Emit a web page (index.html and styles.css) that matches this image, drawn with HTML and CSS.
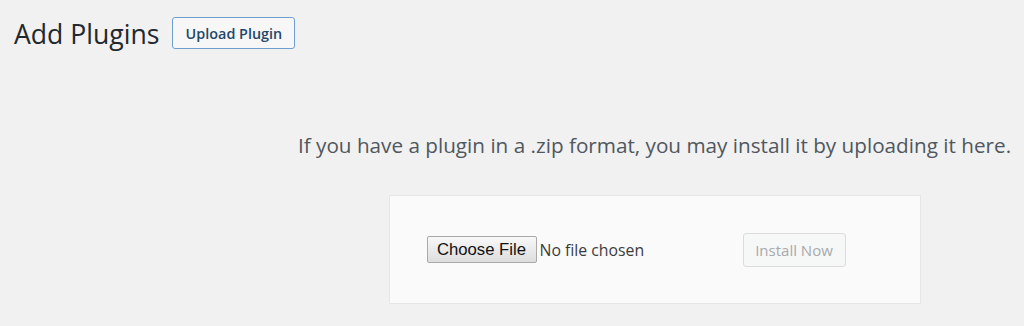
FILE: index.html
```html
<!DOCTYPE html>
<html lang="en">
<head>
    <meta charset="UTF-8">
    <meta name="viewport" content="width=device-width, initial-scale=1.0">
    <title>Add Plugins</title>
    <link rel="stylesheet" href="styles.css">
</head>
<body>
    <div class="wrap">
        <div class="page-head">
            <h1>Add Plugins</h1>
            <button type="button" class="upload-btn">Upload Plugin</button>
        </div>

        <div class="upload-plugin">
            <p class="install-help">If you have a plugin in a .zip format, you may install it by uploading it here.</p>
            <form class="upload-form">
                <button type="button" class="choose-btn">Choose File</button>
                <span class="file-name">No file chosen</span>
                <button type="submit" class="install-btn" disabled>Install Now</button>
            </form>
        </div>
    </div>
</body>
</html>
```

FILE: styles.css
```css
:root {
    --background: #f1f1f1;
    --text: #1d2327;
    --muted: #50575e;
    --primary: #6f9fd0;
    --primary-dark: #24476a;
}

* {
    margin: 0;
    padding: 0;
    box-sizing: border-box;
}

body {
    font-family: "Open Sans", "Noto Sans", sans-serif;
    background: var(--background);
    color: var(--text);
    height: 326px;
    overflow: hidden;
}

.page-head {
    display: flex;
    align-items: flex-start;
    padding: 17px 0 0 14px;
}

h1 {
    font-size: 26.6px;
    font-weight: 400;
    line-height: 32px;
    margin-top: 1px;
    color: #23282d;
}

.upload-btn {
    margin-left: 13px;
    width: 123px;
    height: 32px;
    font-family: inherit;
    font-size: 14.4px;
    font-weight: 600;
    color: var(--primary-dark);
    background: #f7f7f7;
    border: 1px solid var(--primary);
    border-radius: 3px;
}

.upload-plugin {
    margin-left: 285px;
    width: 739px;
    text-align: center;
}

.install-help {
    margin-top: 81px;
    font-size: 20.7px;
    line-height: 28px;
    color: var(--muted);
}

.upload-form {
    display: flex;
    align-items: center;
    width: 532px;
    height: 109px;
    margin: 36px auto 0;
    padding: 0 74px 0 37px;
    background: #fafafa;
    border: 1px solid #e6e6e6;
}

.choose-btn {
    width: 110px;
    height: 27px;
    font-family: "Liberation Sans", Arial, sans-serif;
    font-size: 16.7px;
    color: #111;
    background: linear-gradient(#f8f8f8, #dddddd);
    border: 1px solid #a9a9a9;
    border-radius: 2px;
}

.file-name {
    margin-left: 3px;
    font-size: 15.8px;
    color: #3c3c3c;
}

.install-btn {
    margin-left: auto;
    width: 103px;
    height: 34px;
    font-family: inherit;
    font-size: 15px;
    color: #a7aaad;
    background: #f6f7f7;
    border: 1px solid #dcdcde;
    border-radius: 3px;
}
```
